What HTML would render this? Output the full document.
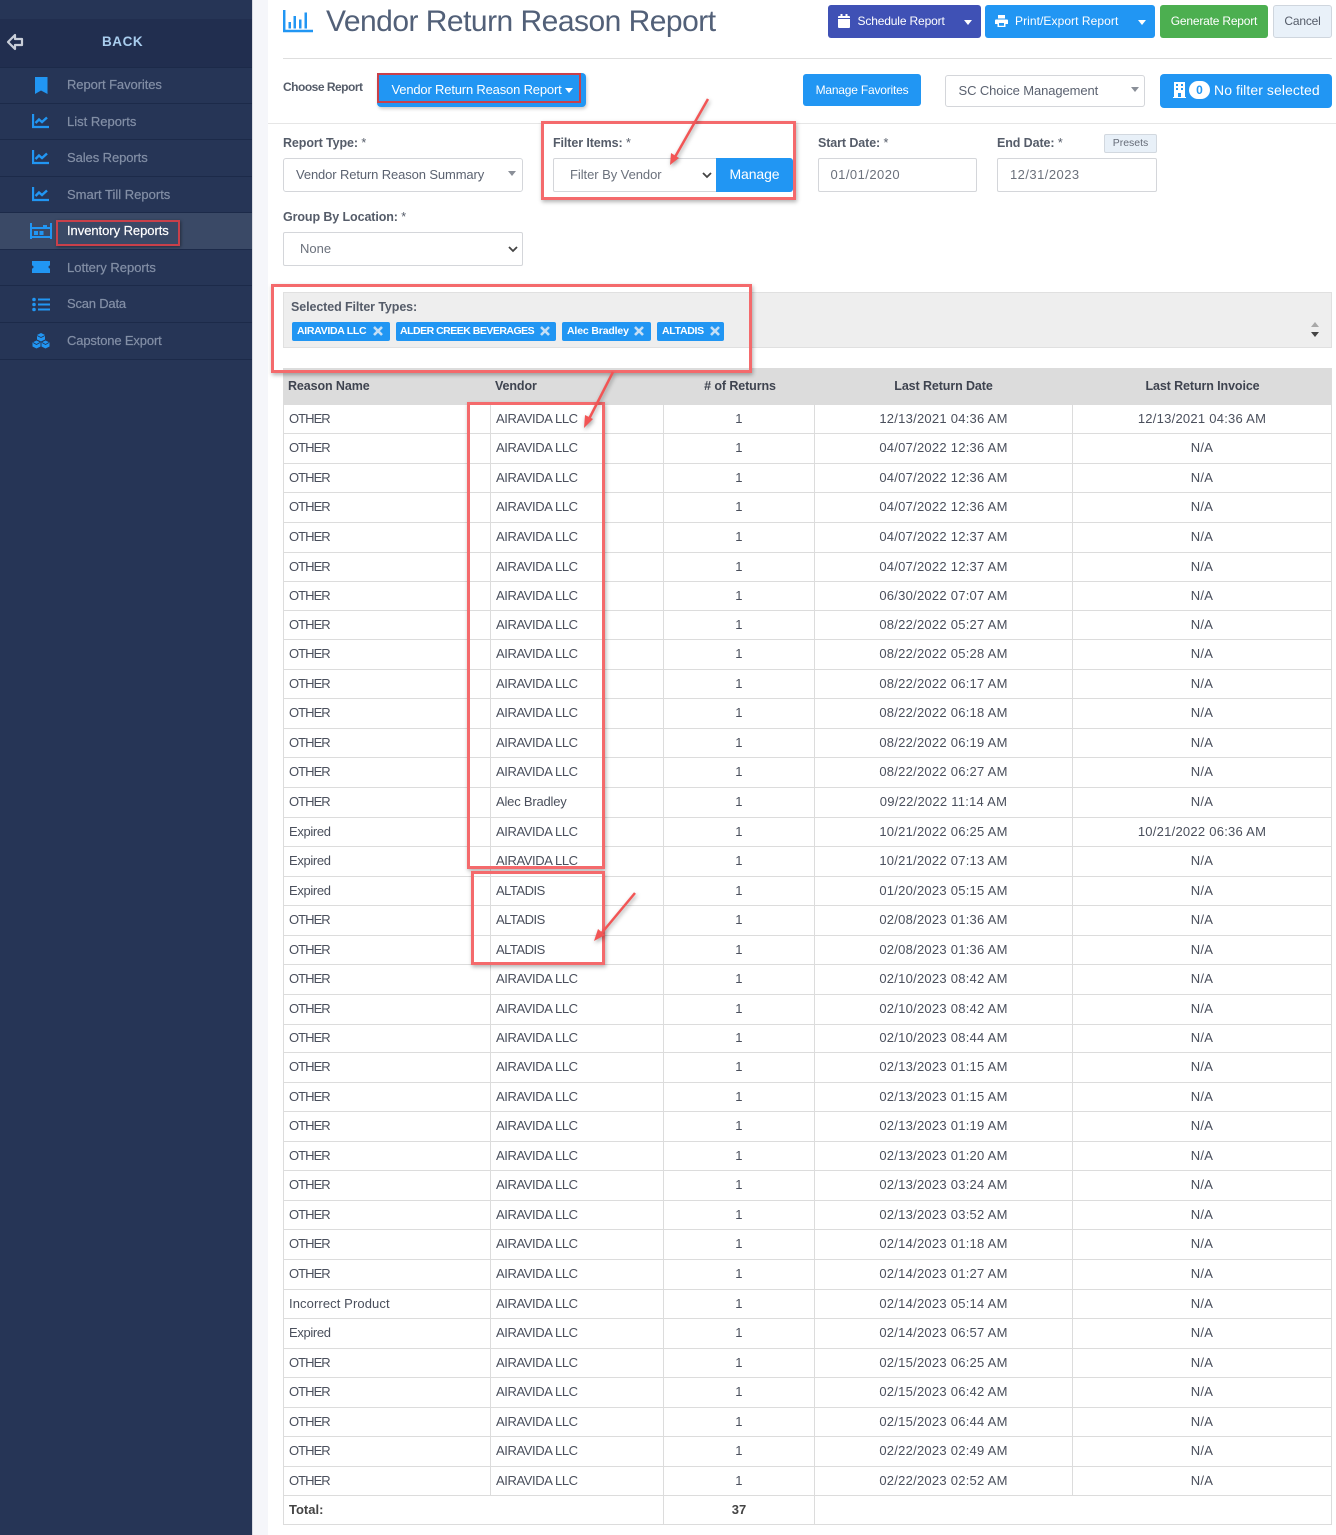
<!DOCTYPE html>
<html><head><meta charset="utf-8"><title>Vendor Return Reason Report</title>
<style>
html,body{margin:0;padding:0;background:#fff}
body{width:1336px;height:1535px;position:relative;overflow:hidden;font-family:"Liberation Sans",sans-serif;color:#454c5c}
.a{position:absolute;white-space:nowrap}
.box{position:absolute;box-sizing:border-box}
.m{position:absolute;left:67px;font-size:13px;font-weight:400;color:#838fa6;letter-spacing:-.08px;white-space:nowrap;line-height:16px;-webkit-text-stroke:.2px}
.d{position:absolute;left:0;width:252px;height:1px;background:#1c2a49}
.lb{position:absolute;font-size:12.5px;font-weight:700;color:#555c69;letter-spacing:-.1px;white-space:nowrap;line-height:16px}
.lb span{font-weight:400}
.btn{position:absolute;box-sizing:border-box;border-radius:3px;color:#fff;font-size:12px;letter-spacing:-.2px;line-height:16px;white-space:nowrap}
.inp{position:absolute;box-sizing:border-box;background:#fff;border:1px solid #d4d6da;border-radius:2px;font-size:13px;color:#5b6270;white-space:nowrap}
.caret{position:absolute;width:0;height:0;border-left:4px solid transparent;border-right:4px solid transparent;border-top:5px solid #fff}
.chip{position:absolute;top:322px;height:19px;background:#2196f3;border-radius:2px;color:#fff;font-size:10.5px;font-weight:700;line-height:19px;padding-left:5px;box-sizing:border-box;letter-spacing:-.3px;white-space:nowrap}
.chip svg{position:absolute;top:4px}
.red{position:absolute;box-sizing:border-box;border:3px solid #f46a6c;box-shadow:1px 2px 4px rgba(0,0,0,.3)}
.th{position:absolute;top:378px;font-size:12.5px;font-weight:700;color:#3f4450;line-height:16px;letter-spacing:-.1px;white-space:nowrap}
table{position:absolute;left:283px;top:404px;width:1049px;border-collapse:collapse;table-layout:fixed;font-size:13px;color:#4a4f5c}
td{border:1px solid #dcdcdc;padding:0 0 2px;text-align:center;white-space:nowrap;overflow:hidden;letter-spacing:.25px}
td.l{text-align:left;padding-left:5px;letter-spacing:-.4px}
td.l:first-child{letter-spacing:-.95px}
td.l.e{letter-spacing:-.35px}
td.l.i{letter-spacing:.1px}
td.l.v{letter-spacing:-.2px}
td.l.t{letter-spacing:-.5px}
td.b,td.l.b{font-weight:700;color:#444;letter-spacing:0}
</style></head><body>

<!-- sidebar -->
<div class="box" style="left:0;top:0;width:252px;height:1535px;background:#263556"></div>
<div class="box" style="left:252px;top:0;width:1px;height:1535px;background:#d9dbe2"></div>
<div class="box" style="left:253px;top:0;width:15px;height:1535px;background:#f5f6fa"></div>
<div class="box" style="left:0;top:19px;width:252px;height:48px;background:#212e4f"></div>
<svg class="a" style="left:6px;top:33px" width="18" height="18" viewBox="0 0 18 18"><path d="M9 2 2 9l7 7v-4h7V6H9z" fill="none" stroke="#c9ced8" stroke-width="2.2" stroke-linejoin="round"/></svg>
<div class="a" style="left:102px;top:34px;font-size:13.5px;font-weight:700;color:#a9cdee;letter-spacing:.55px;line-height:16px">BACK</div>

<div class="box" style="left:0;top:213px;width:252px;height:36px;background:#3a4966"></div>
<div class="d" style="top:67px"></div><div class="d" style="top:103px"></div><div class="d" style="top:139px"></div><div class="d" style="top:176px"></div><div class="d" style="top:212px"></div><div class="d" style="top:249px"></div><div class="d" style="top:285px"></div><div class="d" style="top:322px"></div><div class="d" style="top:359px"></div>

<div class="m" style="top:77px">Report Favorites</div>
<div class="m" style="top:114px;letter-spacing:0">List Reports</div>
<div class="m" style="top:150px">Sales Reports</div>
<div class="m" style="top:187px;letter-spacing:0">Smart Till Reports</div>
<div class="m" style="top:223px;color:#fff;letter-spacing:-.05px">Inventory Reports</div>
<div class="m" style="top:260px;letter-spacing:0">Lottery Reports</div>
<div class="m" style="top:296px;letter-spacing:-.2px">Scan Data</div>
<div class="m" style="top:333px;letter-spacing:-.15px">Capstone Export</div>

<svg class="a" style="left:32px;top:76px" width="18" height="18" viewBox="0 0 18 18"><path d="M3 1h12.500v17L9 14.500 3 18z" fill="#2196f3"/></svg>
<svg class="a" style="left:32px;top:113px" width="18" height="16" viewBox="0 0 18 16"><path d="M1 1v13h16" fill="none" stroke="#2196f3" stroke-width="2.300"/><path d="M3.500 10 7 6.500l3 2.500L15 4.500" fill="none" stroke="#2196f3" stroke-width="2.400"/></svg>
<svg class="a" style="left:32px;top:149px" width="18" height="16" viewBox="0 0 18 16"><path d="M1 1v13h16" fill="none" stroke="#2196f3" stroke-width="2.300"/><path d="M3.500 10 7 6.500l3 2.500L15 4.500" fill="none" stroke="#2196f3" stroke-width="2.400"/></svg>
<svg class="a" style="left:32px;top:186px" width="18" height="16" viewBox="0 0 18 16"><path d="M1 1v13h16" fill="none" stroke="#2196f3" stroke-width="2.300"/><path d="M3.500 10 7 6.500l3 2.500L15 4.500" fill="none" stroke="#2196f3" stroke-width="2.400"/></svg>
<svg class="a" style="left:30px;top:222px" width="22" height="18" viewBox="0 0 22 18"><path d="M1 1v16M21 1v16M1 15h20M1 6h20" fill="none" stroke="#2196f3" stroke-width="2"/><path d="M4 9h4v4H4zM9.500 9h4v4h-4zM13 3h4v3h-4z" fill="#2196f3"/></svg>
<svg class="a" style="left:32px;top:261px" width="18" height="12" viewBox="0 0 18 12"><path d="M0 0h18v4.500a1.500 1.500 0 0 0 0 3V12H0V7.500a1.500 1.500 0 0 0 0-3z" fill="#2196f3"/></svg>
<svg class="a" style="left:32px;top:297px" width="18" height="15" viewBox="0 0 18 15"><path d="M6 2.500h12M6 7.500h12M6 12.500h12" stroke="#2196f3" stroke-width="2"/><circle cx="2" cy="2.500" r="1.800" fill="#2196f3"/><circle cx="2" cy="7.500" r="1.800" fill="#2196f3"/><circle cx="2" cy="12.500" r="1.800" fill="#2196f3"/></svg>
<svg class="a" style="left:32px;top:333px" width="18" height="16" viewBox="0 0 18 16"><path d="M9 0l4 2v4.500l-4 2-4-2V2z" fill="#2196f3"/><path d="M4.500 7.500l4 2v4l-4 2-4-2v-4zM13.500 7.500l4 2v4l-4 2-4-2v-4z" fill="#2196f3"/><path d="M5 2.500l4 2 4-2M1 9.500l3.500 2 3.500-2M10 9.500l3.500 2 3.500-2" fill="none" stroke="#263556" stroke-width=".8"/></svg>

<div class="box" style="left:56px;top:220px;width:124px;height:26px;border:2px solid #c9404a;box-shadow:1px 1px 3px rgba(0,0,0,.4)"></div>

<!-- header -->
<svg class="a" style="left:283px;top:10px" width="30" height="23" viewBox="0 0 30 23"><path d="M1.200 0v21h28.800" fill="none" stroke="#2196f3" stroke-width="2.500"/><path d="M5.500 12H8v6.500H5.500zM10.500 6H13v12.500h-2.500zM16 9.500h2.500v9H16zM21.500 2.500H24v16h-2.500z" fill="#2196f3"/></svg>
<div class="a" style="left:326px;top:3px;font-size:30px;line-height:38px;color:#526078;letter-spacing:-.52px">Vendor Return Reason Report</div>

<div class="btn" style="left:828px;top:5px;width:153px;height:33px;background:#3f51b5;padding:8px 0 0 29.500px;letter-spacing:-.15px">Schedule Report</div>
<svg class="a" style="left:838px;top:14px" width="12" height="14" viewBox="0 0 12 14"><path d="M0 5h12v8a1 1 0 0 1-1 1H1a1 1 0 0 1-1-1zM0 4V3a1 1 0 0 1 1-1h1.500V0h2v2h3V0h2v2H11a1 1 0 0 1 1 1v1z" fill="#fff"/></svg>
<div class="caret" style="left:964px;top:20px"></div>
<div class="btn" style="left:985px;top:5px;width:170px;height:33px;background:#2196f3;padding:8px 0 0 30px;letter-spacing:.07px">Print/Export Report</div>
<svg class="a" style="left:995px;top:15px" width="13" height="12" viewBox="0 0 13 12"><path d="M3 0h7v3.500H3zM1 4.500h11a1 1 0 0 1 1 1V9h-2.500v3h-8V9H0V5.500a1 1 0 0 1 1-1zM4 8v2.800h5V8z" fill="#fff"/></svg>
<div class="caret" style="left:1138px;top:20px"></div>
<div class="btn" style="left:1160px;top:5px;width:108px;height:33px;background:#4caf50;text-align:center;padding-top:8px">Generate Report</div>
<div class="btn" style="left:1273px;top:5px;width:59px;height:33px;background:#e9f1f9;border:1px solid #cfd6de;color:#555c69;text-align:center;padding-top:7px">Cancel</div>

<div class="box" style="left:283px;top:58px;width:1049px;height:1px;background:#dedede"></div>
<div class="box" style="left:268px;top:123px;width:1068px;height:1px;background:#e6e6e6"></div>

<div class="lb" style="left:283px;top:79px;font-size:12px;letter-spacing:-.5px">Choose Report</div>
<div class="btn" style="left:377px;top:73px;width:209px;height:34px;background:#2196f3;border-radius:4px;box-shadow:1px 2px 3px rgba(0,0,0,.2);font-size:13px;letter-spacing:-.18px;padding:9px 0 0 14.500px">Vendor Return Reason Report</div>
<div class="caret" style="left:565px;top:88px"></div>
<div class="box" style="left:377px;top:73px;width:204px;height:30px;border:2px solid #c9404a"></div>

<div class="btn" style="left:803px;top:74px;width:118px;height:32px;background:#2196f3;text-align:center;padding-top:8px">Manage Favorites</div>
<div class="inp" style="left:945px;top:75px;width:200px;height:32px;line-height:29px;padding-left:12.500px;border-radius:3px;letter-spacing:-.1px">SC Choice Management</div>
<div class="caret" style="left:1131px;top:87px;border-top-color:#8a8f98"></div>
<div class="btn" style="left:1160px;top:74px;width:172px;height:34px;background:#2196f3;border-radius:4px;font-size:14px;letter-spacing:.08px;padding:8px 0 0 54px">No filter selected</div>
<svg class="a" style="left:1173px;top:82px" width="13" height="16" viewBox="0 0 13 16"><path d="M1 0h11v15h1v1H0v-1h1zM3 2v2h2V2zM3 6v2h2V6zM8 2v2h2V2zM8 6v2h2V6zM5 11v4h3v-4z" fill="#fff" fill-rule="evenodd"/></svg>
<div class="a" style="left:1189px;top:81px;width:21px;height:18px;border-radius:9px;background:#fff;color:#2196f3;font-size:12px;font-weight:700;text-align:center;line-height:18px">0</div>

<!-- form -->
<div class="lb" style="left:283px;top:135px">Report Type: <span>*</span></div>
<div class="inp" style="left:283px;top:158px;width:240px;height:34px;line-height:32px;padding-left:12px;letter-spacing:-.12px;border-radius:3px">Vendor Return Reason Summary</div>
<div class="caret" style="left:508px;top:171px;border-top-color:#8a8f98"></div>

<div class="lb" style="left:553px;top:135px">Filter Items: <span>*</span></div>
<div class="inp" style="left:553px;top:158px;width:170px;height:34px;line-height:32px;padding-left:16px;color:#6b717c;letter-spacing:-.06px">Filter By Vendor</div>
<svg class="a" style="left:702px;top:172px" width="10" height="7" viewBox="0 0 10 7"><path d="M1 1l4 4 4-4" fill="none" stroke="#444" stroke-width="1.800"/></svg>
<div class="btn" style="left:716px;top:158px;width:77px;height:34px;background:#2196f3;border-radius:0 3px 3px 0;font-size:14px;text-align:center;padding-top:8px;letter-spacing:-.1px">Manage</div>

<div class="lb" style="left:818px;top:135px">Start Date: <span>*</span></div>
<div class="inp" style="left:818px;top:158px;width:159px;height:34px;line-height:32px;padding-left:11.500px;color:#6b717c;letter-spacing:.45px">01/01/2020</div>
<div class="lb" style="left:997px;top:135px">End Date: <span>*</span></div>
<div class="box" style="left:1104px;top:134px;width:53px;height:19px;background:#e8f0f8;border:1px solid #d2d8df;border-radius:2px;font-size:10.500px;line-height:17px;text-align:center;color:#666c78">Presets</div>
<div class="inp" style="left:997px;top:158px;width:160px;height:34px;line-height:32px;padding-left:12px;color:#6b717c;letter-spacing:.45px">12/31/2023</div>

<div class="lb" style="left:283px;top:209px">Group By Location: <span>*</span></div>
<div class="inp" style="left:283px;top:232px;width:240px;height:34px;line-height:32px;padding-left:16px;color:#6b717c">None</div>
<svg class="a" style="left:508px;top:246px" width="10" height="7" viewBox="0 0 10 7"><path d="M1 1l4 4 4-4" fill="none" stroke="#444" stroke-width="1.800"/></svg>

<!-- selected filters -->
<div class="box" style="left:283px;top:292px;width:1049px;height:56px;background:#eeeeee;border:1px solid #e0e0e0"></div>
<div class="lb" style="left:291px;top:299px">Selected Filter Types:</div>
<div class="chip" style="left:292px;width:98px">AIRAVIDA LLC<svg style="left:81px" width="10" height="10" viewBox="0 0 10 10"><path d="M1 1l8 8M9 1l-8 8" stroke="#c5dff5" stroke-width="2.600"/></svg></div>
<div class="chip" style="left:396px;width:160px;padding-left:4px;letter-spacing:-.5px">ALDER CREEK BEVERAGES<svg style="left:144px" width="10" height="10" viewBox="0 0 10 10"><path d="M1 1l8 8M9 1l-8 8" stroke="#c5dff5" stroke-width="2.600"/></svg></div>
<div class="chip" style="left:562px;width:89px;letter-spacing:-.15px">Alec Bradley<svg style="left:72px" width="10" height="10" viewBox="0 0 10 10"><path d="M1 1l8 8M9 1l-8 8" stroke="#c5dff5" stroke-width="2.600"/></svg></div>
<div class="chip" style="left:657px;width:67px">ALTADIS<svg style="left:53px" width="10" height="10" viewBox="0 0 10 10"><path d="M1 1l8 8M9 1l-8 8" stroke="#c5dff5" stroke-width="2.600"/></svg></div>
<svg class="a" style="left:1311px;top:322px" width="8" height="16" viewBox="0 0 8 16"><path d="M4 0l4 5H0z" fill="#a8a8a8"/><path d="M0 10h8l-4 5z" fill="#444"/></svg>

<!-- table header -->
<div class="box" style="left:283px;top:368px;width:1049px;height:36px;background:#dcdcdc"></div>
<div class="th" style="left:288px">Reason Name</div>
<div class="th" style="left:495px">Vendor</div>
<div class="th" style="left:664px;width:152px;text-align:center">&#35; of Returns</div>
<div class="th" style="left:814px;width:259px;text-align:center">Last Return Date</div>
<div class="th" style="left:1073px;width:259px;text-align:center">Last Return Invoice</div>

<table>
<colgroup><col style="width:207px"><col style="width:173px"><col style="width:151px"><col style="width:258px"><col style="width:259px"></colgroup>
<tr style="height:29px"><td class="l">OTHER</td><td class="l">AIRAVIDA LLC</td><td>1</td><td>12/13/2021 04:36 AM</td><td>12/13/2021 04:36 AM</td></tr>
<tr style="height:30px"><td class="l">OTHER</td><td class="l">AIRAVIDA LLC</td><td>1</td><td>04/07/2022 12:36 AM</td><td>N/A</td></tr>
<tr style="height:29px"><td class="l">OTHER</td><td class="l">AIRAVIDA LLC</td><td>1</td><td>04/07/2022 12:36 AM</td><td>N/A</td></tr>
<tr style="height:30px"><td class="l">OTHER</td><td class="l">AIRAVIDA LLC</td><td>1</td><td>04/07/2022 12:36 AM</td><td>N/A</td></tr>
<tr style="height:30px"><td class="l">OTHER</td><td class="l">AIRAVIDA LLC</td><td>1</td><td>04/07/2022 12:37 AM</td><td>N/A</td></tr>
<tr style="height:29px"><td class="l">OTHER</td><td class="l">AIRAVIDA LLC</td><td>1</td><td>04/07/2022 12:37 AM</td><td>N/A</td></tr>
<tr style="height:29px"><td class="l">OTHER</td><td class="l">AIRAVIDA LLC</td><td>1</td><td>06/30/2022 07:07 AM</td><td>N/A</td></tr>
<tr style="height:29px"><td class="l">OTHER</td><td class="l">AIRAVIDA LLC</td><td>1</td><td>08/22/2022 05:27 AM</td><td>N/A</td></tr>
<tr style="height:30px"><td class="l">OTHER</td><td class="l">AIRAVIDA LLC</td><td>1</td><td>08/22/2022 05:28 AM</td><td>N/A</td></tr>
<tr style="height:29px"><td class="l">OTHER</td><td class="l">AIRAVIDA LLC</td><td>1</td><td>08/22/2022 06:17 AM</td><td>N/A</td></tr>
<tr style="height:30px"><td class="l">OTHER</td><td class="l">AIRAVIDA LLC</td><td>1</td><td>08/22/2022 06:18 AM</td><td>N/A</td></tr>
<tr style="height:29px"><td class="l">OTHER</td><td class="l">AIRAVIDA LLC</td><td>1</td><td>08/22/2022 06:19 AM</td><td>N/A</td></tr>
<tr style="height:30px"><td class="l">OTHER</td><td class="l">AIRAVIDA LLC</td><td>1</td><td>08/22/2022 06:27 AM</td><td>N/A</td></tr>
<tr style="height:30px"><td class="l">OTHER</td><td class="l v">Alec Bradley</td><td>1</td><td>09/22/2022 11:14 AM</td><td>N/A</td></tr>
<tr style="height:29px"><td class="l e">Expired</td><td class="l">AIRAVIDA LLC</td><td>1</td><td>10/21/2022 06:25 AM</td><td>10/21/2022 06:36 AM</td></tr>
<tr style="height:30px"><td class="l e">Expired</td><td class="l">AIRAVIDA LLC</td><td>1</td><td>10/21/2022 07:13 AM</td><td>N/A</td></tr>
<tr style="height:29px"><td class="l e">Expired</td><td class="l t">ALTADIS</td><td>1</td><td>01/20/2023 05:15 AM</td><td>N/A</td></tr>
<tr style="height:30px"><td class="l">OTHER</td><td class="l t">ALTADIS</td><td>1</td><td>02/08/2023 01:36 AM</td><td>N/A</td></tr>
<tr style="height:29px"><td class="l">OTHER</td><td class="l t">ALTADIS</td><td>1</td><td>02/08/2023 01:36 AM</td><td>N/A</td></tr>
<tr style="height:30px"><td class="l">OTHER</td><td class="l">AIRAVIDA LLC</td><td>1</td><td>02/10/2023 08:42 AM</td><td>N/A</td></tr>
<tr style="height:30px"><td class="l">OTHER</td><td class="l">AIRAVIDA LLC</td><td>1</td><td>02/10/2023 08:42 AM</td><td>N/A</td></tr>
<tr style="height:28px"><td class="l">OTHER</td><td class="l">AIRAVIDA LLC</td><td>1</td><td>02/10/2023 08:44 AM</td><td>N/A</td></tr>
<tr style="height:30px"><td class="l">OTHER</td><td class="l">AIRAVIDA LLC</td><td>1</td><td>02/13/2023 01:15 AM</td><td>N/A</td></tr>
<tr style="height:29px"><td class="l">OTHER</td><td class="l">AIRAVIDA LLC</td><td>1</td><td>02/13/2023 01:15 AM</td><td>N/A</td></tr>
<tr style="height:30px"><td class="l">OTHER</td><td class="l">AIRAVIDA LLC</td><td>1</td><td>02/13/2023 01:19 AM</td><td>N/A</td></tr>
<tr style="height:29px"><td class="l">OTHER</td><td class="l">AIRAVIDA LLC</td><td>1</td><td>02/13/2023 01:20 AM</td><td>N/A</td></tr>
<tr style="height:30px"><td class="l">OTHER</td><td class="l">AIRAVIDA LLC</td><td>1</td><td>02/13/2023 03:24 AM</td><td>N/A</td></tr>
<tr style="height:29px"><td class="l">OTHER</td><td class="l">AIRAVIDA LLC</td><td>1</td><td>02/13/2023 03:52 AM</td><td>N/A</td></tr>
<tr style="height:30px"><td class="l">OTHER</td><td class="l">AIRAVIDA LLC</td><td>1</td><td>02/14/2023 01:18 AM</td><td>N/A</td></tr>
<tr style="height:30px"><td class="l">OTHER</td><td class="l">AIRAVIDA LLC</td><td>1</td><td>02/14/2023 01:27 AM</td><td>N/A</td></tr>
<tr style="height:29px"><td class="l i">Incorrect Product</td><td class="l">AIRAVIDA LLC</td><td>1</td><td>02/14/2023 05:14 AM</td><td>N/A</td></tr>
<tr style="height:30px"><td class="l e">Expired</td><td class="l">AIRAVIDA LLC</td><td>1</td><td>02/14/2023 06:57 AM</td><td>N/A</td></tr>
<tr style="height:29px"><td class="l">OTHER</td><td class="l">AIRAVIDA LLC</td><td>1</td><td>02/15/2023 06:25 AM</td><td>N/A</td></tr>
<tr style="height:30px"><td class="l">OTHER</td><td class="l">AIRAVIDA LLC</td><td>1</td><td>02/15/2023 06:42 AM</td><td>N/A</td></tr>
<tr style="height:29px"><td class="l">OTHER</td><td class="l">AIRAVIDA LLC</td><td>1</td><td>02/15/2023 06:44 AM</td><td>N/A</td></tr>
<tr style="height:30px"><td class="l">OTHER</td><td class="l">AIRAVIDA LLC</td><td>1</td><td>02/22/2023 02:49 AM</td><td>N/A</td></tr>
<tr style="height:29px"><td class="l">OTHER</td><td class="l">AIRAVIDA LLC</td><td>1</td><td>02/22/2023 02:52 AM</td><td>N/A</td></tr>
<tr style="height:29px"><td class="l b" colspan="2">Total:</td><td class="b">37</td><td colspan="2"></td></tr>
</table>

<!-- annotations -->
<div class="red" style="left:541px;top:121px;width:255px;height:79px"></div>
<div class="red" style="left:271px;top:284px;width:481px;height:89px"></div>
<div class="red" style="left:467px;top:402px;width:138px;height:467px"></div>
<div class="red" style="left:471px;top:871px;width:134px;height:94px"></div>
<svg class="a" style="left:0;top:0;filter:drop-shadow(1px 2px 2px rgba(0,0,0,.35))" width="1336" height="1535" viewBox="0 0 1336 1535">
<path d="M708 99 675 157" stroke="#f25555" stroke-width="2.500" fill="none"/><path d="M670 165l1-12 8 5z" fill="#f25555"/>
<path d="M613 372 589 419" stroke="#f25555" stroke-width="2.500" fill="none"/><path d="M584 428l1-13 8 4z" fill="#f25555"/>
<path d="M635 893 600 935" stroke="#f25555" stroke-width="2.500" fill="none"/><path d="M594 941l4-12 7 6z" fill="#f25555"/>
</svg>
</body></html>
